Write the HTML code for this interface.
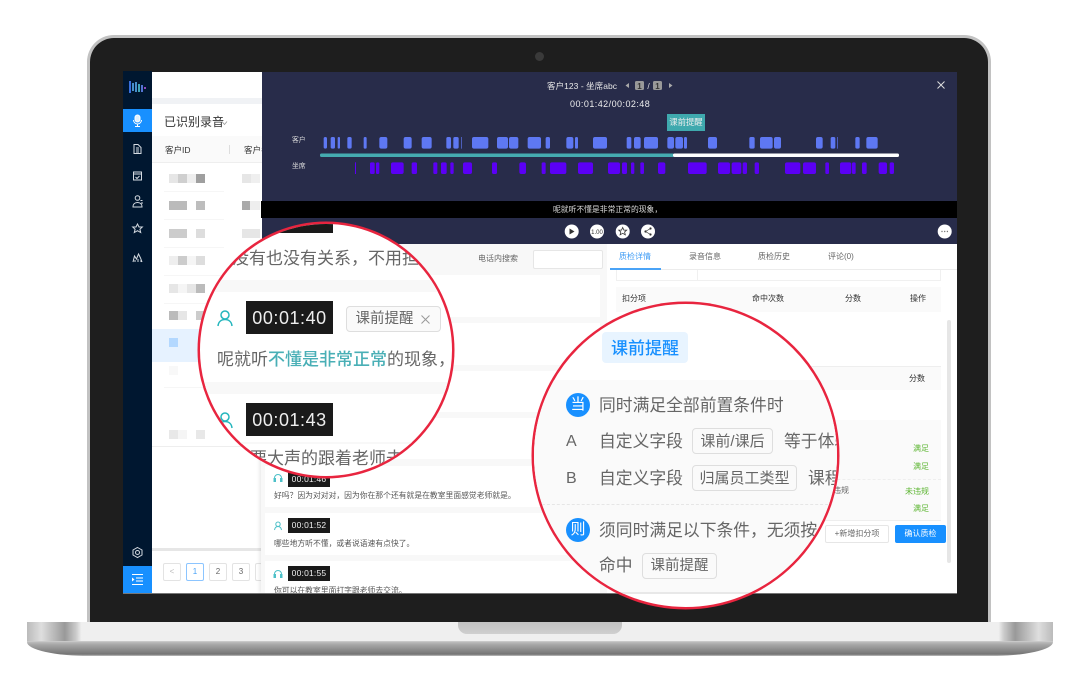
<!DOCTYPE html>
<html lang="zh"><head><meta charset="utf-8"><title>质检</title>
<style>
html,body{margin:0;padding:0;background:#fff}
body{width:1080px;height:691px;position:relative;overflow:hidden;font-family:"Liberation Sans","Noto Sans CJK SC",sans-serif}
#w{position:absolute;left:0;top:0;width:1080px;height:691px;filter:blur(.35px)}
.a{position:absolute}
.t{position:absolute;white-space:nowrap;line-height:1}
.clip{position:absolute;overflow:hidden;border-radius:50%;box-sizing:border-box;border:2px solid #e8253f;background:#fff}
.tag{position:absolute;box-sizing:border-box;border:1.5px solid #dedede;border-radius:4px;background:#fafafa;color:#666;font-size:15px;white-space:nowrap;text-align:center}
.pg{position:absolute;top:563px;width:18px;height:18px;box-sizing:border-box;border:1px solid #e3e3e3;border-radius:2px;font-size:8px;color:#666;text-align:center;line-height:16px;background:#fff}
.card{position:absolute;left:265px;width:335px;background:#fff}
.tm{position:absolute;background:#1a1a1a;color:#eee;font-size:8.500px;text-align:center;line-height:15px;width:42px;height:15px;left:288px;letter-spacing:.2px}
.ct{font-size:7.800px;color:#555}
.th{font-size:8px;color:#333}
.tb{font-size:8px;color:#666}
.ok{font-size:8px;color:#5cb531}
</style></head><body><div id="w">

<!-- base -->
<div class="a" style="left:27px;top:622px;width:1026px;height:34px;border-radius:0 0 62px 62px/0 0 14px 14px;overflow:hidden;background:linear-gradient(180deg,#bbb 0,#bbb 59%,#a8a8a8 66%,#767676 94%,#8e8e8e 97%,#c8c8c8 100%)">
  <div class="a" style="left:0;top:0;width:1026px;height:20px;background:linear-gradient(90deg,#bbb 0,#dedede 1.4%,#999 3.7%,#ccc 4.8%,#efefef 5.3%,#efefef 94.7%,#ccc 95.2%,#999 96.3%,#dedede 98.6%,#bbb 100%);border-bottom:1px solid #c8c8c8;box-sizing:border-box"></div>
  <div class="a" style="left:431px;top:0;width:164px;height:12px;border-radius:0 0 9px 9px;background:linear-gradient(180deg,#c2c2c2,#cfcfcf)"></div>
</div>

<!-- lid -->
<div class="a" style="left:87px;top:35px;width:904px;height:587px;box-sizing:border-box;background:#1e1e1e;border:solid #c2c2c2;border-width:3px 3px 0 3px;border-radius:27px 27px 0 0"></div>
<div class="a" style="left:535px;top:52px;width:9px;height:9px;border-radius:50%;background:#3a3a3a"></div>

<!-- screen -->
<div class="a" style="left:123px;top:72px;width:834px;height:521px;background:#fff;overflow:hidden"></div>
<div class="a" style="left:123px;top:593px;width:834px;height:1px;background:#777"></div>

<!-- sidebar -->
<div class="a" style="left:123px;top:71px;width:29px;height:522px;background:#001730"></div>
<svg class="a" style="left:123px;top:71px" width="29" height="30" viewBox="0 0 29 30"><g stroke-width="1.800" fill="none"><path d="M7 10v12" stroke="#3f78f0"/><path d="M10 12v8" stroke="#4e9ddf"/><path d="M13 11v10" stroke="#4e9ddf"/><path d="M16 13v8" stroke="#47b6c9"/><path d="M19 14v7" stroke="#5e7fe8"/><path d="M22 16v2" stroke="#a04fd0"/></g></svg>
<div class="a" style="left:123px;top:109px;width:29px;height:23px;background:#1890ff"></div>
<svg class="a" style="left:123px;top:109px" width="29" height="23" viewBox="0 0 29 23" fill="none" stroke="#fff" stroke-width="1"><rect x="12" y="6" width="5" height="7" rx="2.500" fill="#dff0ff"/><path d="M10.500 11a4 4 0 0 0 8 0M14.500 15v2M12 17.500h5"/></svg>
<svg class="a" style="left:123px;top:140px" width="29" height="130" viewBox="0 0 29 130" fill="none" stroke="#d5dbe2" stroke-width="1">
  <path d="M11 4.500h4l3 3v6h-7zM13 8h3M13 10h3M13 12h3"/>
  <path d="M10.500 32h8v8h-8zM10.500 34h8M12.500 37l1.500 1.500 2.500-2.500"/>
  <circle cx="14.500" cy="58" r="2.300"/><path d="M10 67c0-3 2-4.500 4.500-4.500s4.500 1.500 4.500 4.500zM17.500 60.500h2M18 63h2"/>
  <path d="M14.500 84l1.500 3h3.300l-2.400 2.300.8 3.200-3.200-1.800-3.200 1.800.8-3.200-2.400-2.300H13z"/>
  <path d="M10 122l1.500-6 2 3 2-5 2 4 1.500 4M12 122v-2M15 122v-3M18 122v-2"/>
</svg>
<svg class="a" style="left:131px;top:546px" width="13" height="13" viewBox="0 0 13 13" fill="none" stroke="#d5dbe2" stroke-width="1"><path d="M6.500 1.500l4.500 2.500v5l-4.500 2.500-4.500-2.500v-5z"/><circle cx="6.500" cy="6.500" r="2"/></svg>
<div class="a" style="left:123px;top:566px;width:29px;height:27px;background:#1890ff"></div>
<svg class="a" style="left:123px;top:566px" width="29" height="27" viewBox="0 0 29 27" fill="none" stroke="#fff" stroke-width="1"><path d="M9 8.500h11M13 12h7M13 15h7M9 18.500h11"/><path d="M9 11.500l2.500 2-2.500 2z" fill="#fff" stroke="none"/></svg>

<!-- list panel -->
<div class="a" style="left:152px;top:98px;width:110px;height:6px;background:#f0f2f5"></div>
<div class="t" style="left:164px;top:116px;font-size:12px;color:#333">已识别录音</div>
<svg class="a" style="left:221px;top:120px" width="7" height="6" viewBox="0 0 7 6" fill="none" stroke="#999" stroke-width=".8"><path d="M1 1.500l2.500 3 2.500-3"/></svg>
<div class="a" style="left:152px;top:136px;width:110px;height:27px;background:#fafafa;border-bottom:1px solid #eee;box-sizing:border-box"></div>
<div class="t th" style="left:165px;top:146px;font-size:8.500px;color:#333">客户ID</div>
<div class="a" style="left:229px;top:145px;width:1px;height:9px;background:#ddd"></div>
<div class="t th" style="left:244px;top:146px;font-size:8.500px;color:#333">客户名</div>
<svg class="a" style="left:152px;top:163px" width="110" height="290" viewBox="0 0 110 290">
  <g fill="none" stroke="#f6f6f6"><path d="M12 28.500h60M12 56.500h60M12 84.500h60M12 112.500h60M12 140.500h60M12 195.500h60M12 224.500h60"/></g>
  <path d="M0 283.500h110" stroke="#eee" fill="none"/>
  <rect x="0" y="166" width="110" height="33" fill="#e6f2ff"/>
  <rect x="17" y="175" width="9" height="9" fill="#b3d8ff"/>
  <g>
    <rect x="17" y="11" width="9" height="9" fill="#e6e6e6"/><rect x="26" y="11" width="9" height="9" fill="#cfcfcf"/><rect x="35" y="11" width="9" height="9" fill="#eee"/><rect x="44" y="11" width="9" height="9" fill="#9f9f9f"/><rect x="90" y="11" width="9" height="9" fill="#e6e6e6"/><rect x="99" y="11" width="9" height="9" fill="#efefef"/>
    <rect x="17" y="38" width="18" height="9" fill="#bbb"/><rect x="44" y="38" width="9" height="9" fill="#bdbdbd"/><rect x="90" y="38" width="8" height="9" fill="#aaa"/><rect x="98" y="38" width="10" height="9" fill="#eee"/>
    <rect x="17" y="66" width="18" height="9" fill="#ccc"/><rect x="44" y="66" width="9" height="9" fill="#ddd"/><rect x="90" y="66" width="18" height="9" fill="#e6e6e6"/>
    <rect x="17" y="93" width="9" height="9" fill="#eee"/><rect x="26" y="93" width="9" height="9" fill="#ccc"/><rect x="35" y="93" width="9" height="9" fill="#f5f5f5"/><rect x="44" y="93" width="9" height="9" fill="#ddd"/>
    <rect x="17" y="121" width="9" height="9" fill="#e6e6e6"/><rect x="26" y="121" width="9" height="9" fill="#f5f5f5"/><rect x="35" y="121" width="9" height="9" fill="#e6e6e6"/><rect x="44" y="121" width="9" height="9" fill="#bbb"/>
    <rect x="17" y="148" width="9" height="9" fill="#bbb"/><rect x="26" y="148" width="9" height="9" fill="#e6e6e6"/><rect x="44" y="148" width="9" height="9" fill="#ccc"/>
    <rect x="17" y="203" width="9" height="9" fill="#f8f8f8"/>
    <rect x="17" y="267" width="9" height="9" fill="#e8e8e8"/><rect x="26" y="267" width="9" height="9" fill="#f5f5f5"/><rect x="44" y="267" width="9" height="9" fill="#e8e8e8"/>
  </g>
</svg>
<div class="a" style="left:152px;top:548px;width:110px;height:3px;background:#e6e6e6"></div>
<div class="pg" style="left:163px;color:#bbb">&lt;</div>
<div class="pg" style="left:186px;border-color:#8cc5ff;color:#4aa3f7">1</div>
<div class="pg" style="left:209px">2</div>
<div class="pg" style="left:232px">3</div>
<div class="pg" style="left:255px;width:7px;border-right:0"></div>

<!-- right area -->
<div class="a" style="left:261px;top:244px;width:696px;height:349px;background:#f8f8f8;box-shadow:-2px 0 3px rgba(0,0,0,.08);overflow:hidden"></div>
<div class="a" style="left:957px;top:71px;width:1px;height:522px;background:#1e1e1e"></div>
<div class="card" style="top:275px;height:42px"></div>
<div class="card" style="top:323px;height:42px"></div>
<div class="card" style="top:371px;height:41px"></div>
<div class="card" style="top:418px;height:41px"></div>
<div class="card" style="top:466px;height:41px"></div>
<div class="card" style="top:513px;height:42px"></div>
<div class="card" style="top:561px;height:32px"></div>

<div class="t" style="left:478px;top:255px;font-size:8px;color:#666">电话内搜索</div>
<div class="a" style="left:533px;top:250px;width:70px;height:19px;box-sizing:border-box;background:#fff;border:1px solid #e6e6e6;border-radius:2px"></div>

<!-- right column -->
<div class="a" style="left:607px;top:244px;width:350px;height:349px;background:#fff"></div>
<div class="a" style="left:610px;top:269px;width:347px;height:1px;background:#ececec"></div>
<div class="a" style="left:610px;top:268px;width:51px;height:2px;background:#4aa3f7"></div>
<div class="t" style="left:619px;top:253px;font-size:8px;color:#3f9cf5">质检详情</div>
<div class="t tb" style="left:689px;top:253px">录音信息</div>
<div class="t tb" style="left:758px;top:253px">质检历史</div>
<div class="t tb" style="left:828px;top:253px">评论(0)</div>
<div class="a" style="left:616px;top:270px;width:325px;height:11px;box-sizing:border-box;border:1px solid #f0f0f0;border-top:0"></div>
<div class="a" style="left:697px;top:270px;width:1px;height:11px;background:#f0f0f0"></div>
<div class="a" style="left:616px;top:287px;width:325px;height:25px;background:#fafafa"></div>
<div class="t th" style="left:622px;top:295px">扣分项</div>
<div class="t th" style="left:752px;top:295px">命中次数</div>
<div class="t th" style="left:845px;top:295px">分数</div>
<div class="t th" style="left:910px;top:295px">操作</div>
<div class="a" style="left:610px;top:366px;width:331px;height:24px;background:#fafafa;border-top:1px solid #eee;box-sizing:border-box"></div>
<div class="t th" style="left:909px;top:375px">分数</div>
<div class="a" style="left:616px;top:420px;width:325px;height:101px;background:#fafafa;border-bottom:1px solid #eee;box-sizing:border-box"></div>
<div class="a" style="left:616px;top:479px;width:325px;border-top:1px dashed #eee"></div>
<div class="t ok" style="left:913px;top:445px">满足</div>
<div class="t ok" style="left:913px;top:463px">满足</div>
<div class="t tb" style="left:833px;top:487px">违规</div>
<div class="t ok" style="left:905px;top:488px">未违规</div>
<div class="t ok" style="left:913px;top:505px">满足</div>
<div class="a" style="left:825px;top:525px;width:64px;height:18px;box-sizing:border-box;border:1px solid #e6e6e6;border-radius:2px;background:#fff;font-size:8px;color:#666;text-align:center;line-height:16px;white-space:nowrap">+新增扣分项</div>
<div class="a" style="left:895px;top:525px;width:51px;height:18px;border-radius:2px;background:#1890ff;font-size:8px;color:#fff;text-align:center;line-height:18px;white-space:nowrap">确认质检</div>
<div class="a" style="left:947px;top:320px;width:4px;height:243px;background:#e6e6e6;border-radius:2px"></div>

<!-- transcript lower -->
<svg class="a" style="left:273px;top:473px" width="10" height="10" viewBox="0 0 10 10" fill="none" stroke="#4cc0c8" stroke-width="1"><path d="M1.500 7V5a3.500 3.500 0 0 1 7 0v2"/><rect x="1" y="5.500" width="1.500" height="3" fill="#4cc0c8"/><rect x="7.500" y="5.500" width="1.500" height="3" fill="#4cc0c8"/></svg>
<div class="tm" style="top:472px">00:01:46</div>
<div class="t ct" style="left:274px;top:492px">好吗？因为对对对，因为你在那个还有就是在教室里面感觉老师就是。</div>
<svg class="a" style="left:273px;top:521px" width="10" height="10" viewBox="0 0 10 10" fill="none" stroke="#4cc0c8" stroke-width="1"><circle cx="5" cy="3.200" r="2.200"/><path d="M1.500 9c.3-2 1.600-3.500 3.500-3.500S8.200 7 8.500 9"/></svg>
<div class="tm" style="top:518px">00:01:52</div>
<div class="t ct" style="left:274px;top:540px">哪些地方听不懂，或者说语速有点快了。</div>
<svg class="a" style="left:273px;top:569px" width="10" height="10" viewBox="0 0 10 10" fill="none" stroke="#4cc0c8" stroke-width="1"><path d="M1.500 7V5a3.500 3.500 0 0 1 7 0v2"/><rect x="1" y="5.500" width="1.500" height="3" fill="#4cc0c8"/><rect x="7.500" y="5.500" width="1.500" height="3" fill="#4cc0c8"/></svg>
<div class="tm" style="top:566px">00:01:55</div>
<div class="a" style="left:262px;top:584px;width:338px;height:9px;overflow:hidden"><div class="t ct" style="left:12px;top:3px">你可以在教室里面打字跟老师去交流。</div></div>

<!-- player -->
<div class="a" style="left:262px;top:72px;width:695px;height:172px;background:#282c4a"></div>
<div class="a" style="left:261px;top:201px;width:696px;height:17px;background:#000"></div>
<div class="t" style="left:547px;top:82px;font-size:8.500px;color:#e8e8e8;letter-spacing:.05px">客户123 - 坐席abc</div>
<svg class="a" style="left:624px;top:80px" width="50" height="11" viewBox="0 0 50 11"><path d="M1.500 5.500l3.500-2.500v5z" fill="#aaa"/><rect x="11" y="1" width="9" height="9" rx="1.500" fill="#999"/><rect x="29" y="1" width="9" height="9" rx="1.500" fill="#999"/><path d="M48.500 5.500l-3.500-2.500v5z" fill="#aaa"/><text x="15.500" y="9" font-size="8" font-weight="bold" fill="#333" text-anchor="middle" font-family="Liberation Sans">1</text><text x="33.500" y="9" font-size="8" font-weight="bold" fill="#333" text-anchor="middle" font-family="Liberation Sans">1</text><text x="24.500" y="9" font-size="8.500" fill="#ddd" text-anchor="middle" font-family="Liberation Sans">/</text></svg>
<div class="t" style="left:570px;top:100px;font-size:9px;color:#eee;letter-spacing:.45px">00:01:42/00:02:48</div>
<div class="a" style="left:667px;top:114px;width:38px;height:17px;background:#3fa9ae;color:#eee;font-size:8.300px;text-align:center;line-height:17px">课前提醒</div>
<svg class="a" style="left:936px;top:80px" width="10" height="10" viewBox="0 0 10 10" stroke="#ddd" stroke-width="1"><path d="M1.500 1.500l7 7M8.500 1.500l-7 7"/></svg>
<div class="t" style="left:292px;top:138px;font-size:6.800px;color:#ddd">客户</div>
<div class="t" style="left:292px;top:164px;font-size:6.800px;color:#ddd">坐席</div>
<div class="t" style="left:553px;top:206px;font-size:7.800px;color:#ddd">呢就听不懂是非常正常的现象，</div>

<svg class="a" style="left:0;top:0" width="1080" height="260" viewBox="0 0 1080 260">
  <g transform="translate(260 70) scale(.33333)" fill="#5e78f3">
    <rect x="191" y="201" width="10" height="35" rx="5"/><rect x="212" y="201" width="13" height="35" rx="5"/><rect x="233" y="201" width="7" height="35" rx="3"/><rect x="262" y="201" width="13" height="35" rx="5"/><rect x="311" y="201" width="9" height="35" rx="4"/><rect x="358" y="201" width="24" height="35" rx="6"/><rect x="431" y="201" width="24" height="35" rx="6"/><rect x="485" y="201" width="30" height="35" rx="6"/><rect x="559" y="201" width="14" height="35" rx="5"/><rect x="580" y="201" width="16" height="35" rx="5"/><rect x="604" y="201" width="2" height="35"/><rect x="636" y="201" width="49" height="35" rx="6"/><rect x="711" y="201" width="33" height="35" rx="6"/><rect x="747" y="201" width="28" height="35" rx="6"/><rect x="803" y="201" width="40" height="35" rx="6"/><rect x="857" y="201" width="13" height="35" rx="5"/><rect x="919" y="201" width="21" height="35" rx="6"/><rect x="945" y="201" width="9" height="35" rx="4"/><rect x="999" y="201" width="42" height="35" rx="6"/>
  </g>
  <g transform="translate(620 70) scale(.33333)" fill="#5e78f3">
    <rect x="20" y="201" width="14" height="35" rx="5"/><rect x="42" y="201" width="20" height="35" rx="6"/><rect x="72" y="201" width="42" height="35" rx="6"/><rect x="142" y="201" width="20" height="35" rx="6"/><rect x="166" y="201" width="23" height="35" rx="6"/><rect x="192" y="201" width="9" height="35" rx="4"/><rect x="264" y="201" width="27" height="35" rx="6"/><rect x="388" y="201" width="16" height="35" rx="5"/><rect x="420" y="201" width="38" height="35" rx="6"/><rect x="462" y="201" width="21" height="35" rx="6"/><rect x="588" y="201" width="20" height="35" rx="6"/><rect x="632" y="201" width="14" height="35" rx="5"/><rect x="652" y="201" width="2" height="35"/><rect x="706" y="201" width="13" height="35" rx="5"/><rect x="739" y="201" width="34" height="35" rx="6"/>
  </g>
  <g transform="translate(260 70) scale(.33333)" fill="#5b00f5">
    <rect x="285" y="277" width="3" height="35"/><rect x="330" y="277" width="14" height="35" rx="4"/><rect x="348" y="277" width="10" height="35" rx="4"/><rect x="393" y="277" width="38" height="35" rx="6"/><rect x="455" y="277" width="16" height="35" rx="5"/><rect x="520" y="277" width="12" height="35" rx="4"/><rect x="543" y="277" width="17" height="35" rx="5"/><rect x="571" y="277" width="10" height="35" rx="4"/><rect x="609" y="277" width="27" height="35" rx="6"/><rect x="696" y="277" width="15" height="35" rx="5"/><rect x="778" y="277" width="20" height="35" rx="6"/><rect x="845" y="277" width="12" height="35" rx="4"/><rect x="870" y="277" width="49" height="35" rx="6"/><rect x="954" y="277" width="45" height="35" rx="6"/><rect x="1044" y="277" width="36" height="35" rx="6"/>
  </g>
  <g transform="translate(620 70) scale(.33333)" fill="#5b00f5">
    <rect x="6" y="277" width="15" height="35" rx="5"/><rect x="33" y="277" width="10" height="35" rx="4"/><rect x="61" y="277" width="11" height="35" rx="4"/><rect x="114" y="277" width="22" height="35" rx="6"/><rect x="204" y="277" width="56" height="35" rx="6"/><rect x="294" y="277" width="36" height="35" rx="6"/><rect x="335" y="277" width="29" height="35" rx="6"/><rect x="368" y="277" width="13" height="35" rx="5"/><rect x="404" y="277" width="13" height="35" rx="5"/><rect x="495" y="277" width="46" height="35" rx="6"/><rect x="549" y="277" width="39" height="35" rx="6"/><rect x="616" y="277" width="11" height="35" rx="4"/><rect x="660" y="277" width="34" height="35" rx="6"/><rect x="696" y="277" width="11" height="35" rx="4"/><rect x="726" y="277" width="14" height="35" rx="5"/><rect x="776" y="277" width="25" height="35" rx="6"/><rect x="809" y="277" width="13" height="35" rx="5"/>
  </g>
  <rect x="320" y="153.500" width="354" height="3.500" rx="1.500" fill="#45abb0"/>
  <rect x="673" y="153.500" width="226" height="3.500" rx="1.500" fill="#fff"/>
  <g fill="#fff"><circle cx="571.700" cy="231.500" r="7"/><circle cx="597" cy="231.500" r="7"/><circle cx="622.700" cy="231.500" r="7"/><circle cx="648" cy="231.500" r="7"/><circle cx="944.700" cy="231.500" r="7"/></g>
  <path d="M569.500 228.500l5 3-5 3z" fill="#333"/>
  <text x="597" y="234" font-size="6" fill="#333" text-anchor="middle" font-family="Liberation Sans">1.00</text>
  <path d="M622.700 227.500l1.200 2.600h2.800l-2.100 1.900.7 2.800-2.600-1.500-2.600 1.500.7-2.800-2.100-1.900h2.800z" fill="none" stroke="#333" stroke-width=".8"/>
  <g fill="#333"><circle cx="645.500" cy="231.500" r="1.100"/><circle cx="650.500" cy="228.500" r="1.100"/><circle cx="650.500" cy="234.500" r="1.100"/></g>
  <path d="M645.500 231.500l5-3M645.500 231.500l5 3" stroke="#333" stroke-width=".7"/>
  <g fill="#777"><circle cx="942" cy="231.500" r=".7"/><circle cx="944.700" cy="231.500" r=".7"/><circle cx="947.400" cy="231.500" r=".7"/></g>
</svg>

<!-- left magnifier -->
<div class="clip" style="left:198px;top:222px;width:256px;height:256px;box-shadow:0 0 0 .5px #e8253f">
  <div class="a" style="left:-2px;top:56px;width:260px;height:12px;background:#f8f8f8"></div>
  <div class="a" style="left:-2px;top:158px;width:260px;height:12px;background:#f8f8f8"></div>
  <div class="a" style="left:-2px;top:218px;width:260px;height:2px;background:#f8f8f8"></div>
  <div class="a" style="left:46px;top:-10px;width:87px;height:19px;background:#1a1a1a"></div>
  <div class="t" style="left:32px;top:26px;font-size:17px;color:#666">没有也没有关系，不用担心</div>
  <svg class="a" style="left:17px;top:86px" width="16" height="17" viewBox="0 0 16 17" fill="none" stroke="#25b6bd" stroke-width="1.500"><circle cx="8" cy="5" r="4"/><path d="M1 16c.4-4 3-6.500 7-6.500s6.600 2.500 7 6.500"/></svg>
  <div class="a" style="left:46px;top:77px;width:87px;height:33px;background:#1a1a1a;color:#eee;font-size:18px;text-align:center;line-height:34px;letter-spacing:.55px">00:01:40</div>
  <div class="tag" style="left:146px;top:82px;width:95px;height:26px;line-height:25px;text-align:left;padding-left:8.500px;font-size:14.500px">课前提醒<svg style="position:absolute;right:10px;top:8px" width="9" height="9" viewBox="0 0 9 9" stroke="#999" stroke-width="1"><path d="M.5.500l8 8M8.500.500l-8 8"/></svg></div>
  <div class="t" style="left:17px;top:127px;font-size:17px;color:#666">呢就听<span style="color:#49afb6;font-weight:500">不懂是非常正常</span>的现象，</div>
  <svg class="a" style="left:17px;top:188px" width="16" height="17" viewBox="0 0 16 17" fill="none" stroke="#25b6bd" stroke-width="1.500"><circle cx="8" cy="5" r="4"/><path d="M1 16c.4-4 3-6.500 7-6.500s6.600 2.500 7 6.500"/></svg>
  <div class="a" style="left:46px;top:179px;width:87px;height:33px;background:#1a1a1a;color:#eee;font-size:18px;text-align:center;line-height:34px;letter-spacing:.55px">00:01:43</div>
  <div class="t" style="left:50px;top:226px;font-size:17px;color:#666">要大声的跟着老师去</div>
</div>

<!-- right magnifier -->
<div class="clip" style="left:532px;top:302px;width:307px;height:307px;box-shadow:0 0 0 .5px #e8253f">
  <div class="a" style="left:-2px;top:76px;width:311px;height:212px;background:#fafafa"></div>
  <div class="a" style="left:-2px;top:288px;width:311px;height:2px;background:#e8e8e8"></div>
  <div class="a" style="left:68px;top:28px;width:86px;height:31px;background:#e8f4ff;border-radius:4px;color:#1890ff;font-size:17px;font-weight:500;text-align:center;line-height:33px">课前提醒</div>
  <div class="a" style="left:32px;top:89px;width:24px;height:24px;border-radius:50%;background:#1890ff;color:#fff;font-size:15px;text-align:center;line-height:24px">当</div>
  <div class="t" style="left:65px;top:94px;font-size:16.800px;color:#666">同时满足全部前置条件时</div>
  <div class="t" style="left:32px;top:130px;font-size:16px;color:#666">A</div>
  <div class="t" style="left:65px;top:130px;font-size:16.800px;color:#666">自定义字段</div>
  <div class="tag" style="left:158px;top:124px;width:81px;height:26px;line-height:25px;font-size:15px">课前/课后</div>
  <div class="t" style="left:250px;top:130px;font-size:16.800px;color:#666">等于体验</div>
  <div class="t" style="left:32px;top:167px;font-size:16px;color:#666">B</div>
  <div class="t" style="left:65px;top:167px;font-size:16.800px;color:#666">自定义字段</div>
  <div class="tag" style="left:158px;top:161px;width:105px;height:26px;line-height:25px;font-size:15px">归属员工类型</div>
  <div class="t" style="left:274px;top:167px;font-size:16.800px;color:#666">课程</div>
  <div class="a" style="left:-2px;top:200px;width:311px;border-top:1px dashed #e6e6e6"></div>
  <div class="a" style="left:32px;top:214px;width:24px;height:24px;border-radius:50%;background:#1890ff;color:#fff;font-size:15px;text-align:center;line-height:24px">则</div>
  <div class="t" style="left:65px;top:219px;font-size:16.800px;color:#666">须同时满足以下条件，无须按</div>
  <div class="t" style="left:65px;top:254px;font-size:16.800px;color:#666">命中</div>
  <div class="tag" style="left:108px;top:249px;width:75px;height:26px;line-height:25px;font-size:14.500px">课前提醒</div>
</div>
</div></body></html>
